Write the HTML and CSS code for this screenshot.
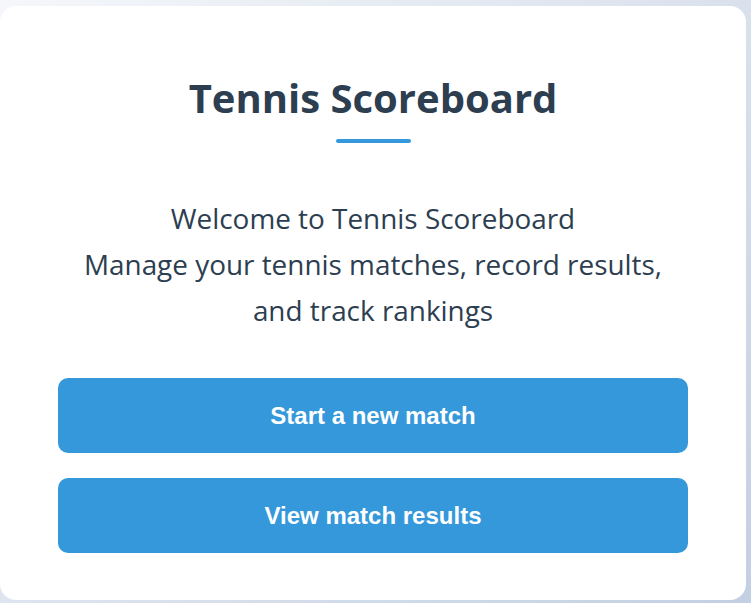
FILE: index.html
```html
<!DOCTYPE html>
<html lang="en">
<head>
<meta charset="utf-8">
<title>Tennis Scoreboard</title>
<link rel="stylesheet" href="styles.css">
</head>
<body>
<main class="card">
  <h1 class="title">Tennis Scoreboard</h1>
  <div class="rule"></div>
  <p class="intro">Welcome to Tennis Scoreboard<br>Manage your tennis matches, record results,<br>and track rankings</p>
  <div class="actions">
    <button class="btn">Start a new match</button>
    <button class="btn">View match results</button>
  </div>
</main>
</body>
</html>
```
FILE: styles.css
```css
html, body {
  margin: 0;
  padding: 0;
  min-height: 100%;
}
body {
  background: linear-gradient(135deg, #f5f7fa 0%, #c3cfe2 100%);
  min-height: 603px;
  padding-top: 6px;
  box-sizing: border-box;
  font-family: "Open Sans", "Noto Sans", sans-serif;
  color: #2c3e50;
}
.card {
  width: 746px;
  min-height: 594px;
  background: #fff;
  border-radius: 16px;
  box-sizing: border-box;
  padding: 64px 58px 40px;
  display: flex;
  flex-direction: column;
  align-items: center;
}
.title {
  margin: 0;
  font-size: 40px;
  font-weight: 700;
  line-height: 56px;
  color: #2c3e50;
}
.rule {
  width: 75px;
  height: 4px;
  border-radius: 2px;
  background: #3498db;
  margin-top: 13px;
}
.intro {
  margin: 52px 0 0;
  font-size: 27.9px;
  line-height: 46px;
  text-align: center;
  color: #2c3e50;
}
.actions {
  align-self: stretch;
  display: flex;
  flex-direction: column;
  gap: 25px;
  margin-top: 45px;
}
.btn {
  height: 75px;
  border: 0;
  border-radius: 10px;
  background: #3498db;
  color: #fff;
  font-family: "Liberation Sans", Arial, sans-serif;
  font-weight: 700;
  font-size: 24px;
  cursor: pointer;
}
```
